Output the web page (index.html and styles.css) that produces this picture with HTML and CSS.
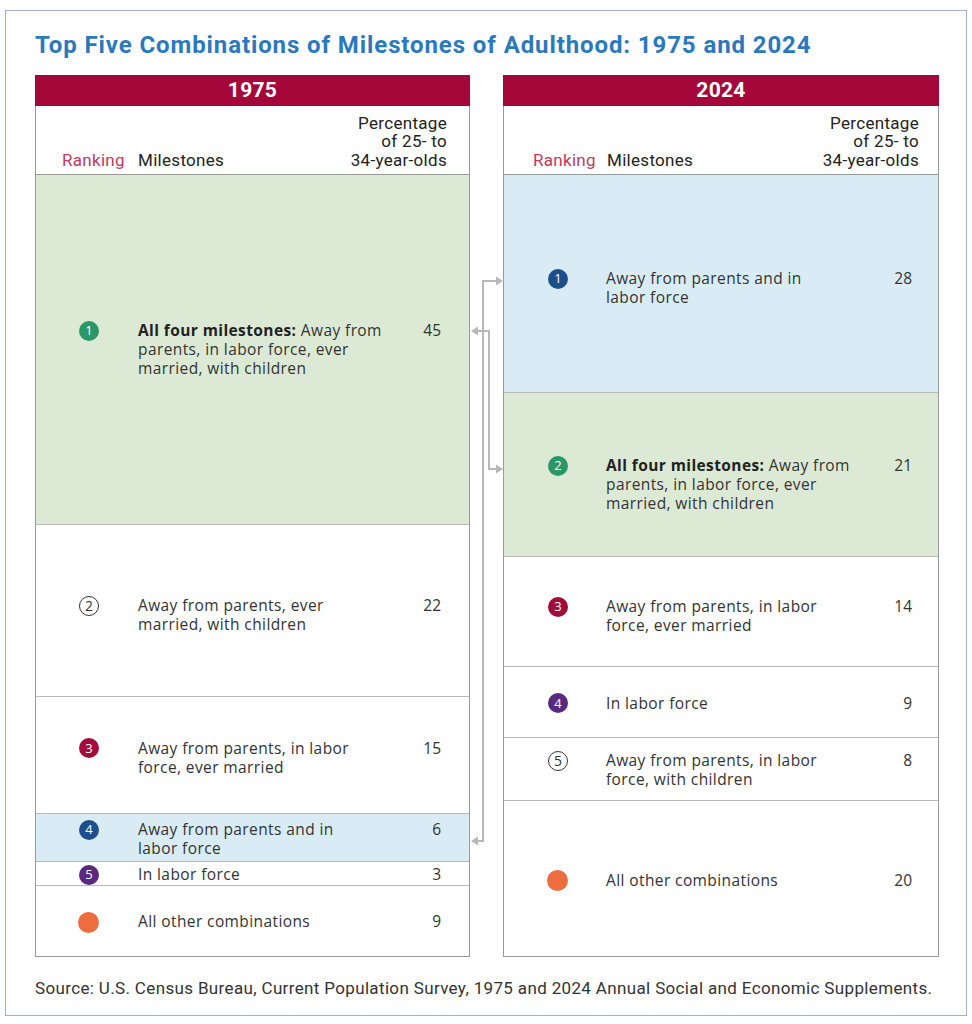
FILE: index.html
```html
<!DOCTYPE html>
<html lang="en">
<head>
<meta charset="utf-8">
<title>Top Five Combinations of Milestones of Adulthood</title>
<link rel="stylesheet" href="styles.css">
</head>
<body>
<div class="frame">
  <h1 class="title">Top Five Combinations of Milestones of Adulthood: 1975 and 2024</h1>
  <div class="tables">
    <section class="panel">
      <div class="year">1975</div>
      <div class="head">
        <span class="h-rank">Ranking</span>
        <span class="h-mile">Milestones</span>
        <span class="h-pct">Percentage<br>of 25- to<br>34-year-olds</span>
      </div>
      <div class="rows">
        <div class="row green up" style="--pct:45">
          <div class="line"><span class="badge b-green">1</span><div class="desc"><b>All four milestones:</b> Away from<br>parents, in labor force, ever<br>married, with children</div><span class="num">45</span></div>
        </div>
        <div class="row down2" style="--pct:22">
          <div class="line"><span class="badge b-outline">2</span><div class="desc">Away from parents, ever<br>married, with children</div><span class="num">22</span></div>
        </div>
        <div class="row down" style="--pct:15">
          <div class="line"><span class="badge b-red">3</span><div class="desc">Away from parents, in labor<br>force, ever married</div><span class="num">15</span></div>
        </div>
        <div class="row blue" style="--pct:6">
          <div class="line"><span class="badge b-blue">4</span><div class="desc">Away from parents and in<br>labor force</div><span class="num">6</span></div>
        </div>
        <div class="row" style="--pct:3">
          <div class="line"><span class="badge b-purple">5</span><div class="desc">In labor force</div><span class="num">3</span></div>
        </div>
        <div class="row" style="--pct:9">
          <div class="line"><span class="badge b-orange"></span><div class="desc">All other combinations</div><span class="num">9</span></div>
        </div>
      </div>
    </section>

    <section class="panel right">
      <div class="year">2024</div>
      <div class="head">
        <span class="h-rank">Ranking</span>
        <span class="h-mile">Milestones</span>
        <span class="h-pct">Percentage<br>of 25- to<br>34-year-olds</span>
      </div>
      <div class="rows">
        <div class="row blue shift-sm" style="--pct:28">
          <div class="line"><span class="badge b-blue">1</span><div class="desc">Away from parents and in<br>labor force</div><span class="num">28</span></div>
        </div>
        <div class="row green shift" style="--pct:21">
          <div class="line"><span class="badge b-green">2</span><div class="desc"><b>All four milestones:</b> Away from<br>parents, in labor force, ever<br>married, with children</div><span class="num">21</span></div>
        </div>
        <div class="row down2" style="--pct:14">
          <div class="line"><span class="badge b-red">3</span><div class="desc">Away from parents, in labor<br>force, ever married</div><span class="num">14</span></div>
        </div>
        <div class="row" style="--pct:9">
          <div class="line"><span class="badge b-purple">4</span><div class="desc">In labor force</div><span class="num">9</span></div>
        </div>
        <div class="row" style="--pct:8">
          <div class="line"><span class="badge b-outline">5</span><div class="desc">Away from parents, in labor<br>force, with children</div><span class="num">8</span></div>
        </div>
        <div class="row down" style="--pct:20">
          <div class="line"><span class="badge b-orange"></span><div class="desc">All other combinations</div><span class="num">20</span></div>
        </div>
      </div>
    </section>

    <svg class="links" width="40" height="800" viewBox="0 0 40 800" aria-hidden="true">
      <path d="M32 206 H18 V766 H11" fill="none" stroke="#b8b8b8" stroke-width="2"/>
      <path d="M11 256 H24 V394 H32" fill="none" stroke="#b8b8b8" stroke-width="2"/>
      <polygon points="38,206 31,201.5 31,210.5" fill="#b8b8b8"/>
      <polygon points="38,394 31,389.5 31,398.5" fill="#b8b8b8"/>
      <polygon points="6,256 13,251.5 13,260.5" fill="#b8b8b8"/>
      <polygon points="6,766 13,761.5 13,770.5" fill="#b8b8b8"/>
    </svg>
  </div>
  <p class="source">Source: U.S. Census Bureau, Current Population Survey, 1975 and 2024 Annual Social and Economic Supplements.</p>
</div>
</body>
</html>
```

FILE: styles.css
```css
html, body {
  margin: 0;
  padding: 0;
  background: #ffffff;
}

body {
  font-family: "Open Sans", "DejaVu Sans", sans-serif;
  color: #333333;
}

.frame {
  margin: 10px 5px 0;
  height: 1006px;
  box-sizing: border-box;
  border: 1px solid #9eb2c6;
  padding: 21px 0 0 29px;
}

.title {
  margin: 0 0 17px;
  font-family: "Roboto", "Liberation Sans", sans-serif;
  font-size: 24px;
  line-height: 26px;
  font-weight: 700;
  color: #2b79bd;
  letter-spacing: 0.9px;
}

.tables {
  position: relative;
  display: grid;
  grid-template-columns: 435px 436px;
  column-gap: 33px;
}

.panel {
  border: 1px solid #9a9a9a;
  border-top: none;
  display: flex;
  flex-direction: column;
}

.year {
  height: 31px;
  margin: 0 -1px;
  background: #a5073a;
  color: #ffffff;
  font-family: "Roboto", "Liberation Sans", sans-serif;
  font-weight: 700;
  font-size: 21px;
  line-height: 31px;
  text-align: center;
  letter-spacing: 0.3px;
}

.head {
  height: 69px;
  box-sizing: border-box;
  display: grid;
  grid-template-columns: 102px 1fr auto;
  align-items: end;
  padding: 0 22px 5px 0;
  border-bottom: 1px solid #9a9a9a;
  font-family: "Roboto", "Liberation Sans", sans-serif;
  font-size: 17px;
  line-height: 18.5px;
  letter-spacing: 0.3px;
  color: #222222;
}

.h-rank {
  padding-left: 26px;
  color: #c13a5c;
}

.h-pct {
  text-align: right;
}

.rows {
  height: 781px;
  display: flex;
  flex-direction: column;
}

.row {
  flex: var(--pct) 1 0;
  min-height: 0;
  display: flex;
  align-items: center;
  border-top: 1px solid #b9b9b9;
  box-sizing: border-box;
}

.row:first-child {
  border-top: none;
}

.row.green {
  background: #dcead5;
}

.row.blue {
  background: #d9ecf6;
}

.line {
  flex: 1;
  display: grid;
  grid-template-columns: 102px 1fr auto;
  align-items: start;
  padding-right: 28px;
  margin-top: 3px;
  font-size: 15.5px;
  line-height: 19px;
  letter-spacing: 0.4px;
  color: #333333;
}

.row.up .line { margin-top: 0; }
.row.down .line { margin-top: 5px; }
.row.down2 .line { margin-top: 9px; }
.row.shift .line { margin-top: 20px; }
.row.shift-sm .line { margin-top: 9px; }

.desc b {
  font-weight: 700;
  color: #222222;
}

.num {
  text-align: right;
  letter-spacing: 0;
}

.badge {
  margin-left: 43px;
  width: 20px;
  height: 20px;
  border-radius: 50%;
  box-sizing: border-box;
  display: flex;
  align-items: center;
  justify-content: center;
  font-size: 13px;
  line-height: 1;
  letter-spacing: 0;
  color: #ffffff;
  margin-top: -0.5px;
}

.b-green { background: #2a9768; }
.b-blue { background: #1d4f8d; }
.b-red { background: #a10c3c; }
.b-purple { background: #58297f; }
.b-orange { background: #ee6d3f; width: 21px; height: 21px; margin-left: 42px; }
.b-outline {
  background: #ffffff;
  border: 1.5px solid #333333;
  color: #333333;
  font-size: 14px;
}

.panel.right .head {
  grid-template-columns: 103px 1fr auto;
  padding-right: 19px;
}

.panel.right .h-rank {
  padding-left: 29px;
}

.panel.right .line {
  padding-right: 26px;
}

.panel.right .badge {
  margin-left: 44px;
  margin-right: -1px;
}

.panel.right .b-orange {
  margin-left: 43px;
}

.links {
  position: absolute;
  left: 430px;
  top: 0;
}

.source {
  margin: 21px 0 0;
  font-family: "Roboto", "Liberation Sans", sans-serif;
  font-size: 17px;
  line-height: 20px;
  letter-spacing: 0.35px;
  color: #333333;
}
```
